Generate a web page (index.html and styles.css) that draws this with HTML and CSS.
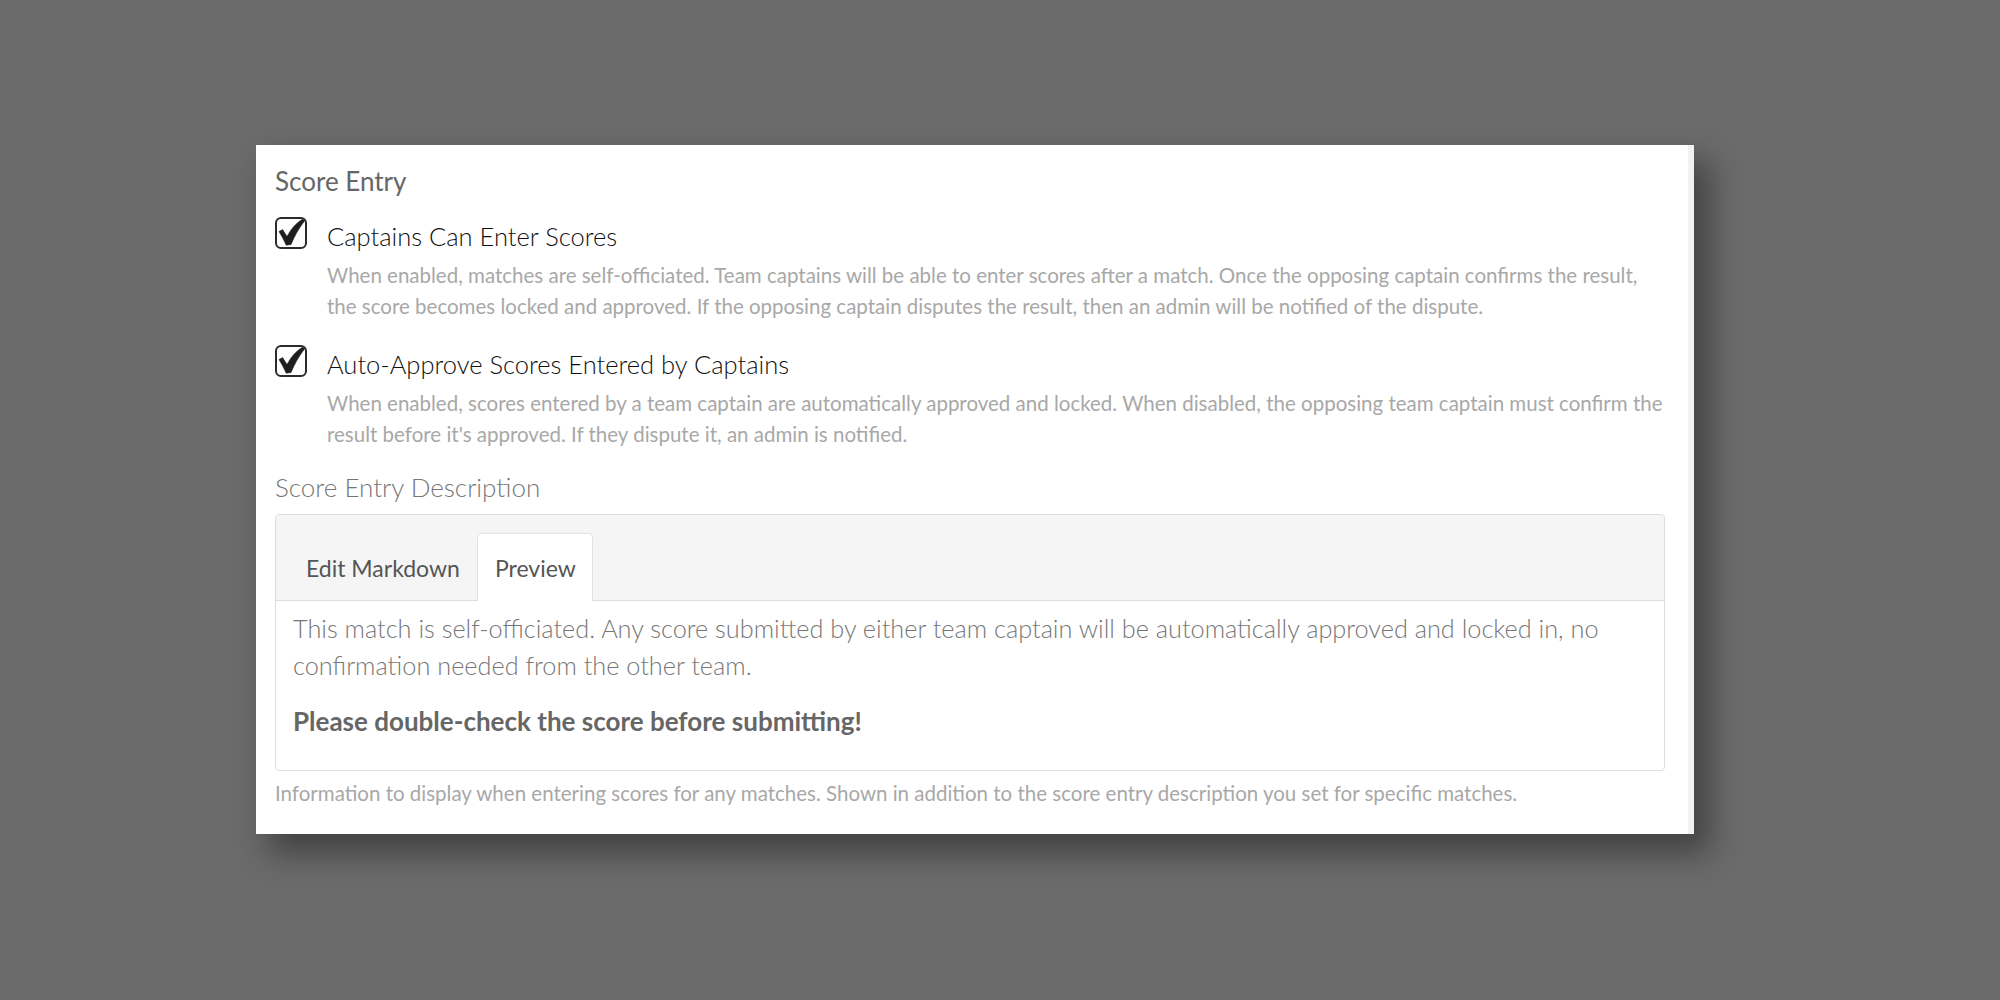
FILE: index.html
```html
<!DOCTYPE html>
<html lang="en">
<head>
  <meta charset="UTF-8">
  <title>Score Entry Settings</title>
  <link rel="stylesheet" href="styles.css">
</head>
<body>

<div class="panel">
  <h3 class="panel-title">Score Entry</h3>

  <div class="option">
    <div class="option-row">
      <svg class="check" viewBox="0 0 32 32" width="32" height="32">
        <rect x="1" y="1" width="30" height="30" rx="5" fill="#fff" stroke="#2b2b2b" stroke-width="2"/>
        <path d="M4 14.5 L7.6 12.6 L12 19.6 C16 12 21 6 27.6 2.2 L29.8 3.6 C24 11 19.5 19 16 27.6 L11.2 28.2 C9 23.2 6.6 18.6 4 14.5 Z" fill="#1e1e1e" stroke="#1e1e1e" stroke-width="0.6" stroke-linejoin="round"/>
      </svg>
      <span class="option-label">Captains Can Enter Scores</span>
    </div>
    <p class="option-help">When enabled, matches are self-officiated. Team captains will be able to enter scores after a match. Once the opposing captain confirms the result, the score becomes locked and approved. If the opposing captain disputes the result, then an admin will be notified of the dispute.</p>
  </div>

  <div class="option">
    <div class="option-row">
      <svg class="check" viewBox="0 0 32 32" width="32" height="32">
        <rect x="1" y="1" width="30" height="30" rx="5" fill="#fff" stroke="#2b2b2b" stroke-width="2"/>
        <path d="M4 14.5 L7.6 12.6 L12 19.6 C16 12 21 6 27.6 2.2 L29.8 3.6 C24 11 19.5 19 16 27.6 L11.2 28.2 C9 23.2 6.6 18.6 4 14.5 Z" fill="#1e1e1e" stroke="#1e1e1e" stroke-width="0.6" stroke-linejoin="round"/>
      </svg>
      <span class="option-label">Auto-Approve Scores Entered by Captains</span>
    </div>
    <p class="option-help">When enabled, scores entered by a team captain are automatically approved and locked. When disabled, the opposing team captain must confirm the result before it's approved. If they dispute it, an admin is notified.</p>
  </div>

  <label class="field-label">Score Entry Description</label>
  <div class="editor">
    <div class="editor-tabs">
      <span class="tab">Edit Markdown</span>
      <span class="tab active">Preview</span>
    </div>
    <div class="editor-preview">
      <p>This match is self-officiated. Any score submitted by either team captain will be automatically approved and locked in, no confirmation needed from the other team.</p>
      <p class="strong">Please double-check the score before submitting!</p>
    </div>
  </div>
  <p class="field-help">Information to display when entering scores for any matches. Shown in addition to the score entry description you set for specific matches.</p>
</div>

</body>
</html>
```

FILE: styles.css
```css
body {
  margin: 0;
  height: 1000px;
  background: #6b6b6b;
  font-family: Lato, "Open Sans", sans-serif;
  padding: 145px 0 0 256px;
  box-sizing: border-box;
}
.panel {
  width: 1438px;
  height: 689px;
  box-sizing: border-box;
  background: #fff;
  border-right: 6px solid #f2f2f2;
  padding: 22px 23px 0 19px;
  box-shadow: 14px 18px 30px 2px rgba(0,0,0,0.38);
}
.panel-title {
  margin: 0;
  font-size: 26px;
  line-height: 29px;
  font-weight: 400;
  color: #666;
}
.option {
  margin-top: 21px;
}
.option + .option {
  margin-top: 23px;
}
.option-row {
  display: flex;
  align-items: flex-start;
  gap: 20px;
  height: 32px;
}
.check {
  display: block;
  flex: none;
}
.option-label {
  font-size: 25.5px;
  line-height: 32px;
  padding-top: 3px;
  font-weight: 300;
  color: #111;
}
.option-help {
  margin: 11px -6px 0 52px;
  font-size: 20.5px;
  line-height: 31px;
  color: #a8a8a8;
}
.field-label {
  display: block;
  margin-top: 23px;
  font-size: 26px;
  line-height: 28px;
  font-weight: 300;
  color: #777;
}
.editor {
  margin-top: 13px;
  border: 1px solid #ddd;
  border-radius: 4px;
  height: 257px;
  box-sizing: border-box;
}
.editor-tabs {
  display: flex;
  background: #f5f5f5;
  border-bottom: 1px solid #ddd;
  border-radius: 4px 4px 0 0;
  padding: 18px 0 0 12px;
  height: 86px;
  box-sizing: border-box;
}
.tab {
  font-size: 23px;
  line-height: 27px;
  padding: 21px 16px 19px 17px;
  color: #555;
  border: 1px solid transparent;
  border-bottom: none;
  border-radius: 5px 5px 0 0;
}
.tab.active {
  background: #fff;
  border-color: #e2e2e2;
  margin-bottom: -1px;
}
.editor-preview {
  padding: 9px 17px 0 17px;
}
.editor-preview p {
  margin: 0 0 19px;
  font-size: 25.3px;
  line-height: 37px;
  font-weight: 300;
  color: #777;
}
.editor-preview p.strong {
  font-size: 26px;
  font-weight: 700;
  color: #666;
}
.field-help {
  margin: 7px 0 0;
  font-size: 20.5px;
  line-height: 31px;
  color: #a8a8a8;
}
```
